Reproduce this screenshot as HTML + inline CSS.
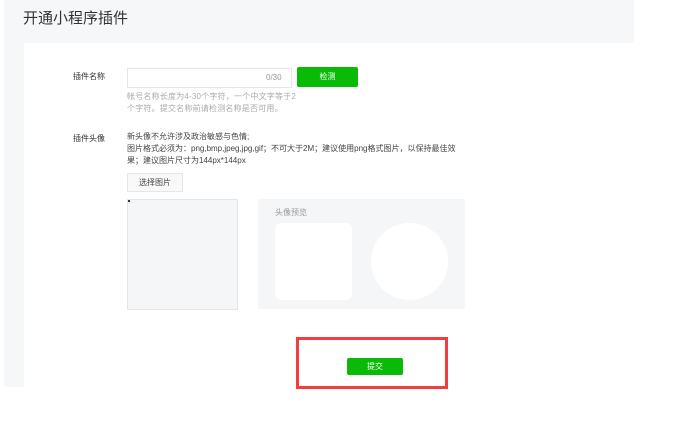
<!DOCTYPE html>
<html><head><meta charset="utf-8"><style>
*{margin:0;padding:0;box-sizing:border-box}
body{width:678px;height:421px;background:#fff;position:relative;overflow:hidden;font-family:"Liberation Sans","Noto Sans CJK SC",sans-serif;color:#333}
.a{position:absolute}
.t{font-size:8px;white-space:nowrap}
</style></head><body>
<div class="a" style="left:4px;top:0;width:630px;height:43px;background:#f6f7f9"></div>
<div class="a" style="left:4px;top:43px;width:20px;height:344px;background:#f6f7f9"></div>
<div class="a" style="left:23px;top:7px;font-size:15px;color:#333">开通小程序插件</div>
<div class="a t" style="left:73px;top:71px;color:#333">插件名称</div>
<div class="a" style="left:127px;top:68px;width:165px;height:20px;border:1px solid #e4e6e9;background:#fff"></div>
<div class="a t" style="left:266px;top:73px;color:#999">0/30</div>
<div class="a" style="left:297px;top:67px;width:61px;height:20px;background:#09bb07;border-radius:2px;color:#fff;font-size:8px;text-align:center;line-height:20px">检测</div>
<div class="a t" style="left:127px;top:91px;color:#aaa;line-height:12px;letter-spacing:0.2px">帐号名称长度为4-30个字符，一个中文字等于2<br>个字符。提交名称前请检测名称是否可用。</div>
<div class="a t" style="left:73px;top:133px;color:#333">插件头像</div>
<div class="a t" style="left:127px;top:131px;color:#444;line-height:12px">新头像不允许涉及政治敏感与色情;<br>图片格式必须为：png,bmp,jpeg,jpg,gif；不可大于2M；建议使用png格式图片，以保持最佳效<br>果；建议图片尺寸为144px*144px</div>
<div class="a" style="left:127px;top:173px;width:56px;height:19px;border:1px solid #e4e6e9;background:#f9f9f9;font-size:8px;text-align:center;line-height:17px;color:#444">选择图片</div>
<div class="a" style="left:127px;top:199px;width:111px;height:111px;background:#f4f6f8;border:1px solid #e4e6e9"></div>
<div class="a" style="left:128px;top:200px;width:2px;height:2px;background:#333"></div>
<div class="a" style="left:258px;top:199px;width:207px;height:110px;background:#f4f6f8"></div>
<div class="a t" style="left:275px;top:207px;color:#999">头像预览</div>
<div class="a" style="left:275px;top:223px;width:77px;height:77px;background:#fff;border-radius:6px"></div>
<div class="a" style="left:371px;top:223px;width:77px;height:77px;background:#fff;border-radius:50%"></div>
<div class="a" style="left:296px;top:337px;width:152px;height:52px;border:3px solid #f33c3c"></div>
<div class="a" style="left:347px;top:358px;width:56px;height:17px;background:#09bb07;border-radius:2px;color:#fff;font-size:8px;text-align:center;line-height:17px">提交</div>
</body></html>
